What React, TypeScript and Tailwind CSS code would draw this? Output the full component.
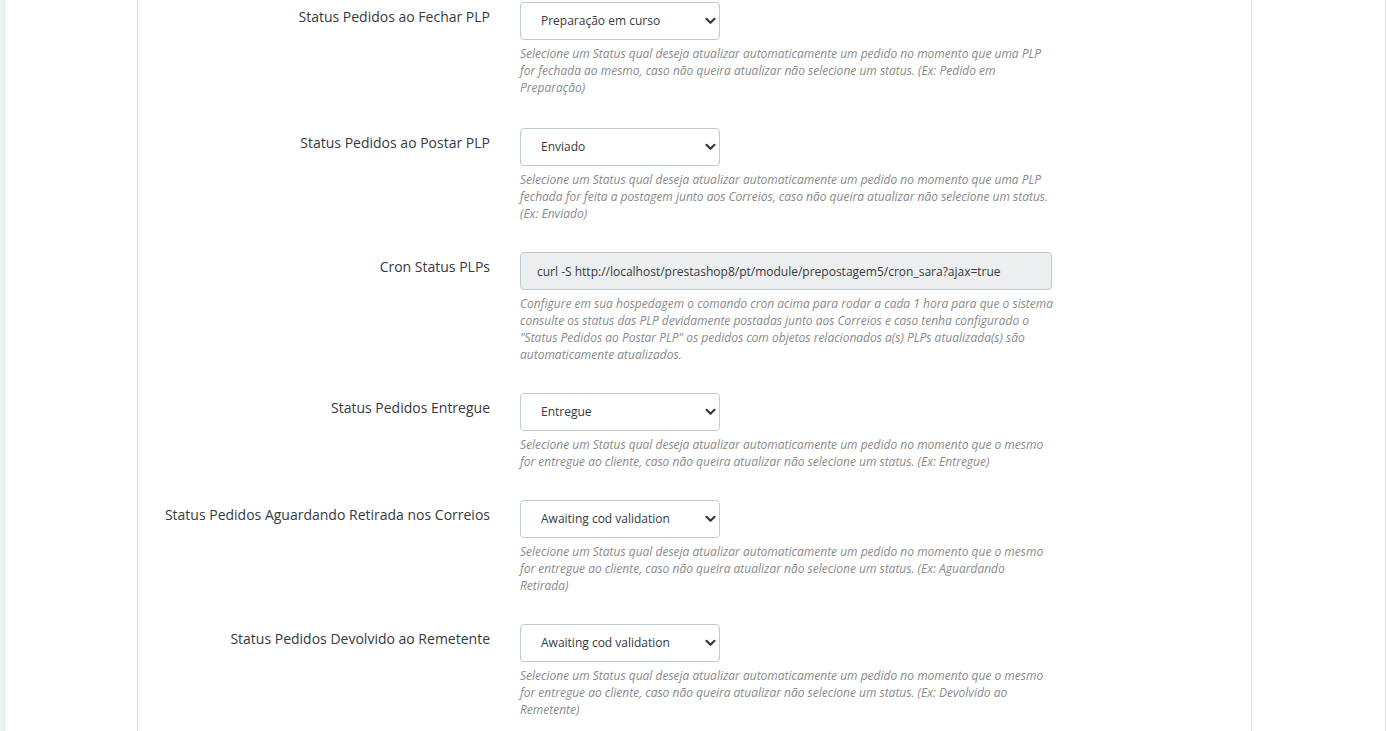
import React from 'react';

type Row = {
  label: string;
  kind: 'select' | 'input';
  value: string;
  help: string;
};

const rows: Row[] = [
  {
    label: 'Status Pedidos ao Fechar PLP',
    kind: 'select',
    value: 'Preparação em curso',
    help: 'Selecione um Status qual deseja atualizar automaticamente um pedido no momento que uma PLP for fechada ao mesmo, caso não queira atualizar não selecione um status. (Ex: Pedido em Preparação)',
  },
  {
    label: 'Status Pedidos ao Postar PLP',
    kind: 'select',
    value: 'Enviado',
    help: 'Selecione um Status qual deseja atualizar automaticamente um pedido no momento que uma PLP fechada for feita a postagem junto aos Correios, caso não queira atualizar não selecione um status. (Ex: Enviado)',
  },
  {
    label: 'Cron Status PLPs',
    kind: 'input',
    value: 'curl -S http://localhost/prestashop8/pt/module/prepostagem5/cron_sara?ajax=true',
    help: 'Configure em sua hospedagem o comando cron acima para rodar a cada 1 hora para que o sistema consulte os status das PLP devidamente postadas junto aos Correios e caso tenha configurado o "Status Pedidos ao Postar PLP" os pedidos com objetos relacionados a(s) PLPs atualizada(s) são automaticamente atualizados.',
  },
  {
    label: 'Status Pedidos Entregue',
    kind: 'select',
    value: 'Entregue',
    help: 'Selecione um Status qual deseja atualizar automaticamente um pedido no momento que o mesmo for entregue ao cliente, caso não queira atualizar não selecione um status. (Ex: Entregue)',
  },
  {
    label: 'Status Pedidos Aguardando Retirada nos Correios',
    kind: 'select',
    value: 'Awaiting cod validation',
    help: 'Selecione um Status qual deseja atualizar automaticamente um pedido no momento que o mesmo for entregue ao cliente, caso não queira atualizar não selecione um status. (Ex: Aguardando Retirada)',
  },
  {
    label: 'Status Pedidos Devolvido ao Remetente',
    kind: 'select',
    value: 'Awaiting cod validation',
    help: 'Selecione um Status qual deseja atualizar automaticamente um pedido no momento que o mesmo for entregue ao cliente, caso não queira atualizar não selecione um status. (Ex: Devolvido ao Remetente)',
  },
];

const Chevron = () => (
  <svg width="11" height="8" viewBox="0 0 11 8" className="pointer-events-none absolute right-[4px] top-1/2 -translate-y-1/2">
    <path d="M1.5 1.8 L5.5 5.8 L9.5 1.8" fill="none" stroke="#363a41" strokeWidth="2.2" strokeLinecap="round" strokeLinejoin="round" />
  </svg>
);

const FormRow = ({ row, first }: { row: Row; first: boolean }) => (
  <div className={first ? 'flex mb-[32px]' : 'flex mb-[30px]'}>
    <label className="w-[352px] shrink-0 pt-[5px] text-right text-[14px] leading-[20px] text-[#363a41]">
      {row.label}
    </label>
    <div className="ml-[30px] w-[535px]">
      {row.kind === 'select' ? (
        <div className="relative w-[200px] h-[38px]">
          <select
            defaultValue={row.value}
            className="w-full h-full appearance-none rounded-[4px] border border-[#bbcdd2] bg-white pl-[20px] pr-[30px] text-[12px] text-[#363a41] outline-none"
          >
            <option>{row.value}</option>
          </select>
          <Chevron />
        </div>
      ) : (
        <input
          readOnly
          value={row.value}
          className="block w-[532px] h-[38px] rounded-[4px] border border-[#bbcdd2] bg-[#eceeef] pl-[16px] text-[12px] text-[#363a41] outline-none"
        />
      )}
      <p className="mt-[5px] text-[12px] italic leading-[17px] text-[#8a8a8a]">{row.help}</p>
    </div>
  </div>
);

export default function App() {
  return (
    <div
      className="flex h-[731px] overflow-hidden bg-white"
      style={{ fontFamily: '"Open Sans", "Noto Sans", sans-serif' }}
    >
      <div className="w-[5px] shrink-0 bg-[#eef0f2] border-r border-[#dde5e6]" />
      <div className="flex-1 pl-[132px] border-r border-[#e3e3e3]">
        <div className="w-[1115px] h-full border-x border-[#dcdcdc] bg-white pt-[2px]">
          {rows.map((r, i) => (
            <FormRow key={r.label} row={r} first={i === 0} />
          ))}
        </div>
      </div>
    </div>
  );
}
